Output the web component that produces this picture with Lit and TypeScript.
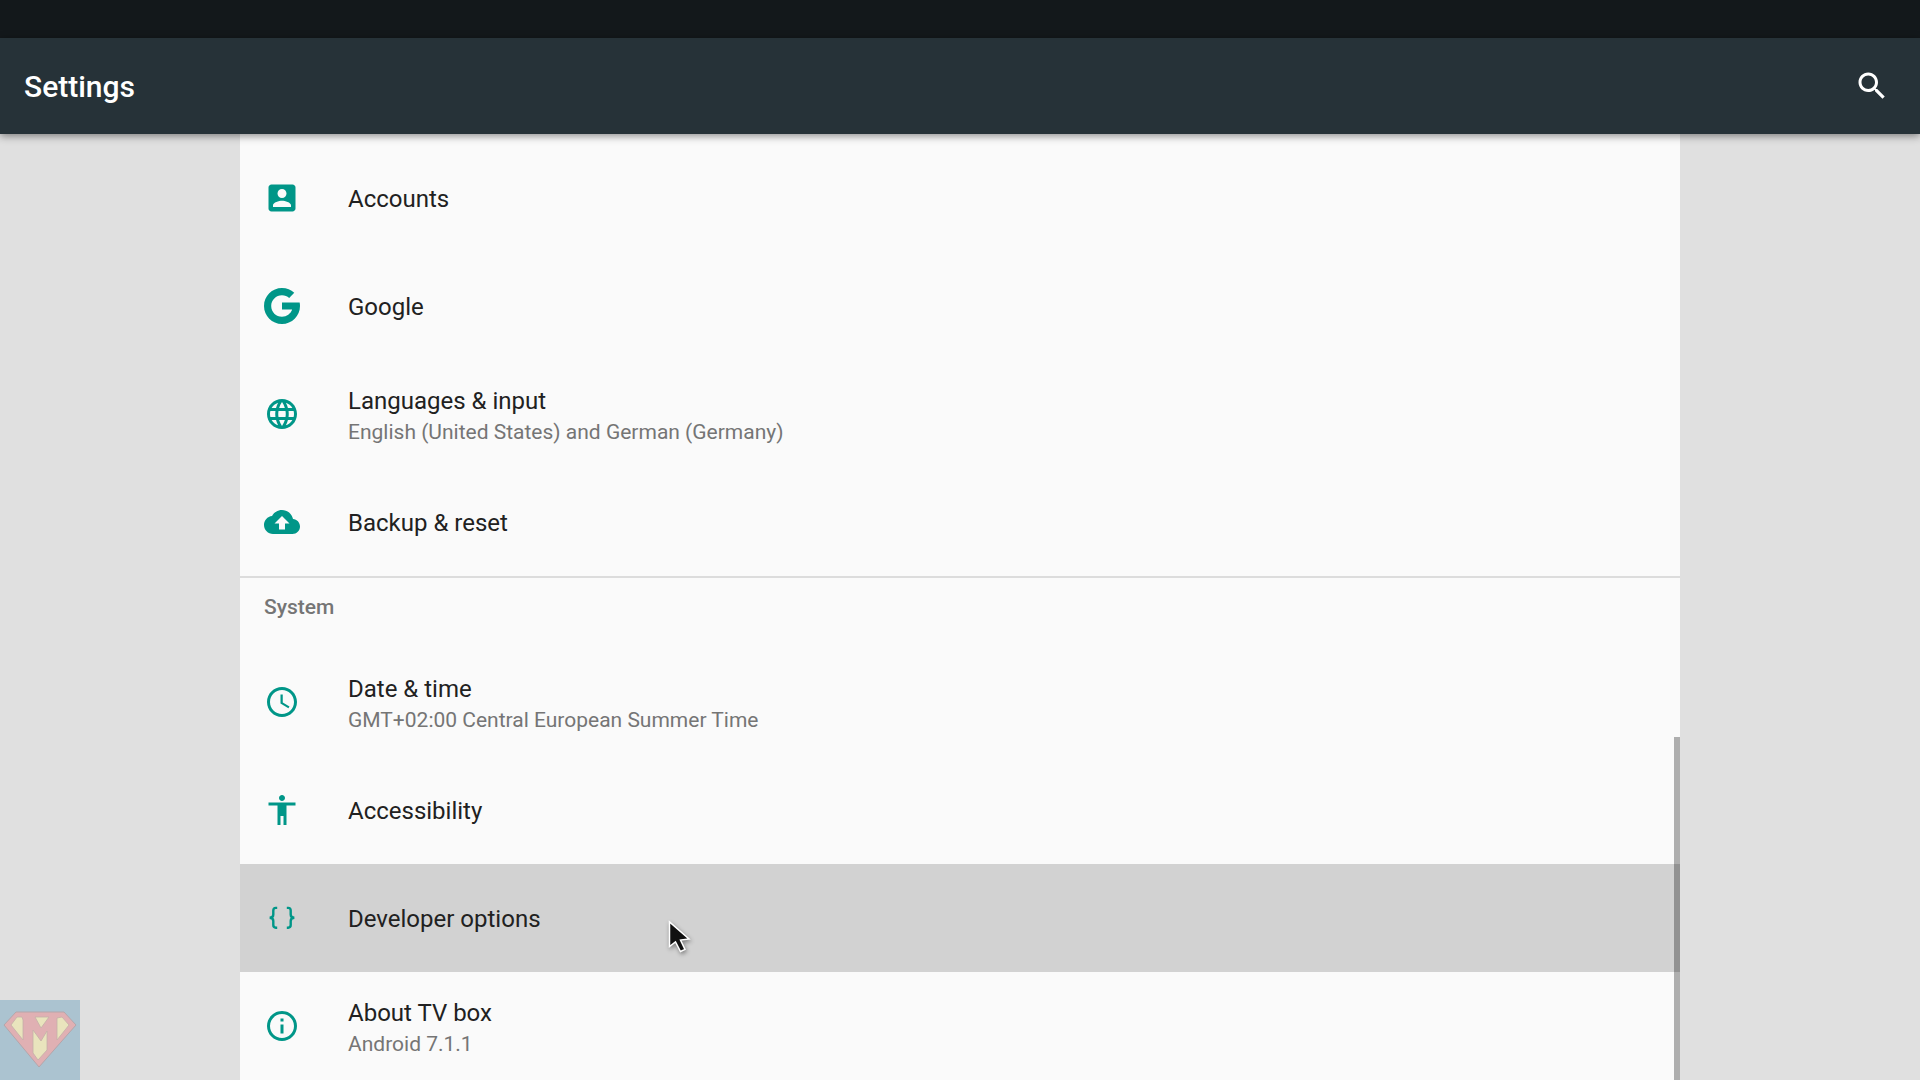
import { LitElement, html, css, svg, nothing, type TemplateResult } from "lit";
import { customElement, property } from "lit/decorators.js";
import { classMap } from "lit/directives/class-map.js";

type Entry = { title: string; summary?: string; icon: keyof typeof icons; active?: boolean };

const icons = {
  account: svg`<path d="M3 5v14c0 1.100.89 2 2 2h14c1.100 0 2-.9 2-2V5c0-1.100-.9-2-2-2H5c-1.110 0-2 .9-2 2zm12 4c0 1.660-1.340 3-3 3s-3-1.340-3-3 1.340-3 3-3 3 1.340 3 3zm-9 8c0-2 4-3.100 6-3.100s6 1.100 6 3.100v1H6v-1z"/>`,
  google: svg`<g transform="scale(.6) translate(-4 -4)"><path d="M43.611 20.083H42V20H24v8h11.303c-1.649 4.657-6.080 8-11.303 8-6.627 0-12-5.373-12-12s5.373-12 12-12c3.059 0 5.842 1.154 7.961 3.039l5.657-5.657C34.046 6.053 29.268 4 24 4 12.955 4 4 12.955 4 24s8.955 20 20 20 20-8.955 20-20c0-1.341-.138-2.650-.389-3.917z"/></g>`,
  language: svg`<path d="M11.990 2C6.470 2 2 6.480 2 12s4.470 10 9.990 10C17.520 22 22 17.520 22 12S17.520 2 11.990 2zm6.930 6h-2.950c-.32-1.250-.78-2.450-1.380-3.560 1.840.63 3.370 1.910 4.330 3.560zM12 4.040c.83 1.200 1.480 2.530 1.910 3.960h-3.820c.43-1.430 1.080-2.760 1.910-3.960zM4.260 14C4.100 13.360 4 12.690 4 12s.1-1.360.26-2h3.380c-.08.66-.14 1.320-.14 2s.06 1.340.14 2H4.260zm.82 2h2.950c.32 1.250.78 2.450 1.380 3.560-1.840-.63-3.370-1.900-4.330-3.560zm2.950-8H5.080c.96-1.660 2.490-2.930 4.330-3.560C8.810 5.550 8.350 6.750 8.030 8zM12 19.960c-.83-1.200-1.480-2.530-1.910-3.960h3.820c-.43 1.430-1.080 2.760-1.910 3.960zM14.340 14H9.660c-.09-.66-.16-1.320-.16-2s.07-1.350.16-2h4.680c.09.65.16 1.320.16 2s-.07 1.340-.16 2zm.25 5.560c.6-1.110 1.060-2.310 1.380-3.560h2.950c-.96 1.650-2.490 2.930-4.330 3.560zM16.360 14c.08-.66.14-1.320.14-2s-.06-1.340-.14-2h3.380c.16.64.26 1.310.26 2s-.1 1.360-.26 2h-3.380z"/>`,
  backup: svg`<path d="M19.350 10.040C18.670 6.590 15.640 4 12 4 9.110 4 6.600 5.640 5.350 8.040 2.340 8.360 0 10.910 0 14c0 3.310 2.690 6 6 6h13c2.760 0 5-2.240 5-5 0-2.640-2.050-4.780-4.650-4.960zM14 13v4h-4v-4H7l5-5 5 5h-3z"/>`,
  clock: svg`<path d="M11.990 2C6.470 2 2 6.480 2 12s4.470 10 9.990 10C17.520 22 22 17.520 22 12S17.520 2 11.990 2zM12 20c-4.420 0-8-3.580-8-8s3.580-8 8-8 8 3.580 8 8-3.580 8-8 8zm.5-13H11v6l5.250 3.150.75-1.230-4.500-2.670z"/>`,
  accessibility: svg`<path d="M12 2c1.100 0 2 .9 2 2s-.9 2-2 2-2-.9-2-2 .9-2 2-2zm9 7h-6v13h-2v-6h-2v6H9V9H3V7h18v2z"/>`,
  braces: svg`<g transform="scale(.6667)" fill="none" stroke="currentColor" stroke-width="2.400"><path d="M13.200 7.900h-1.400q-2.500 0-2.500 2.600v4q0 3.300-3.700 3.300q3.700 0 3.700 3.300v4q0 2.600 2.500 2.600h1.400M22.800 7.900h1.400q2.500 0 2.500 2.600v4q0 3.300 3.700 3.300q-3.700 0-3.700 3.300v4q0 2.600-2.500 2.600h-1.400"/></g>`,
  info: svg`<path d="M11 17h2v-6h-2v6zm1-15C6.480 2 2 6.480 2 12s4.480 10 10 10 10-4.480 10-10S17.520 2 12 2zm0 18c-4.410 0-8-3.590-8-8s3.590-8 8-8 8 3.590 8 8-3.590 8-8 8zM11 9h2V7h-2v2z"/>`,
  search: svg`<path d="M15.500 14h-.79l-.28-.27C15.410 12.590 16 11.110 16 9.500 16 5.910 13.090 3 9.500 3S3 5.910 3 9.500 5.910 16 9.500 16c1.610 0 3.090-.59 4.230-1.570l.27.28v.79l5 4.990L20.490 19l-4.990-5zm-6 0C7.010 14 5 11.990 5 9.500S7.010 5 9.500 5 14 7.010 14 9.500 11.990 14 9.500 14z"/>`,
};

const personal: Entry[] = [
  { title: "Accounts", icon: "account" },
  { title: "Google", icon: "google" },
  { title: "Languages & input", summary: "English (United States) and German (Germany)", icon: "language" },
  { title: "Backup & reset", icon: "backup" },
];

const system: Entry[] = [
  { title: "Date & time", summary: "GMT+02:00 Central European Summer Time", icon: "clock" },
  { title: "Accessibility", icon: "accessibility" },
  { title: "Developer options", icon: "braces", active: true },
  { title: "About TV box", summary: "Android 7.1.1", icon: "info" },
];

@customElement("settings-icon")
export class SettingsIcon extends LitElement {
  @property() name: keyof typeof icons = "info";

  static styles = css`
    :host {
      display: block;
      flex: none;
      width: 36px;
      height: 36px;
    }
    .glyph {
      display: block;
      width: 100%;
      height: 100%;
      fill: currentColor;
    }
  `;

  render() {
    return html`<svg class="glyph" viewBox="0 0 24 24" aria-hidden="true">${icons[this.name]}</svg>`;
  }
}

@customElement("settings-row")
export class SettingsRow extends LitElement {
  @property({ attribute: false }) entry!: Entry;

  static styles = css`
    :host {
      display: block;
    }
    .row {
      display: flex;
      align-items: center;
      gap: 48px;
      min-height: 108px;
      padding: 0 24px;
      box-sizing: border-box;
      color: #212121;
      text-decoration: none;
    }
    .active {
      background: #d2d2d2;
    }
    .icon {
      color: #009688;
    }
    .text {
      display: flex;
      flex-direction: column;
      padding-top: 2px;
    }
    .title {
      font-size: 24px;
      line-height: 34px;
    }
    .summary {
      font-size: 21px;
      line-height: 28px;
      color: #757575;
    }
  `;

  render() {
    const { title, summary, icon, active = false } = this.entry;
    return html`
      <a class=${classMap({ row: true, active })} href="#">
        <settings-icon class="icon" .name=${icon}></settings-icon>
        <span class="text">
          <span class="title">${title}</span>
          ${summary ? html`<span class="summary">${summary}</span>` : nothing}
        </span>
      </a>
    `;
  }
}

@customElement("app-root")
export class AppRoot extends LitElement {
  static styles = css`
    :host {
      display: flex;
      flex-direction: column;
      position: relative;
      height: 100vh;
      overflow: hidden;
      background: #e0e0e0;
      font-family: Roboto, "Liberation Sans", sans-serif;
    }
    .status {
      flex: none;
      height: 38px;
      background: #13181b;
    }
    .bar {
      display: flex;
      flex: none;
      align-items: center;
      justify-content: space-between;
      height: 96px;
      padding: 0 30px 0 24px;
      background: #263238;
      color: #fff;
      box-shadow: 0 2px 8px rgba(0, 0, 0, 0.45);
      z-index: 1;
    }
    .heading {
      margin: 0;
      padding-top: 2px;
      font-size: 30px;
      line-height: 40px;
      font-weight: 500;
    }
    .search {
      padding: 0;
      border: 0;
      background: none;
      color: inherit;
    }
    .content {
      position: relative;
      flex: 1;
      min-height: 0;
      width: 75%;
      margin: 0 auto;
      padding-top: 10px;
      box-sizing: border-box;
      overflow: hidden;
      background: #fafafa;
    }
    .list {
      margin: 0;
      padding: 0;
      list-style: none;
    }
    .section {
      margin: 0;
      height: 72px;
      padding: 15px 24px 0;
      box-sizing: border-box;
      border-top: 2px solid #dcdcdc;
      font-size: 21px;
      line-height: 28px;
      font-weight: 500;
      color: #757575;
    }
    .thumb {
      position: absolute;
      right: 0;
      bottom: 0;
      width: 6px;
      height: 343px;
      background: rgba(0, 0, 0, 0.3);
    }
    .pointer {
      position: absolute;
      left: 663px;
      top: 917px;
      width: 32px;
      height: 42px;
      z-index: 2;
      filter: drop-shadow(1px 2px 2px rgba(0, 0, 0, 0.4));
    }
    .badge {
      position: absolute;
      left: 0;
      bottom: 0;
      width: 80px;
      height: 80px;
    }
  `;

  private rows(entries: Entry[]): TemplateResult {
    return html`<ul class="list">
      ${entries.map((entry) => html`<li><settings-row .entry=${entry}></settings-row></li>`)}
    </ul>`;
  }

  render() {
    return html`
      <div class="status"></div>
      <header class="bar">
        <h1 class="heading">Settings</h1>
        <button class="search" aria-label="Search"><settings-icon name="search"></settings-icon></button>
      </header>
      <main class="content">
        ${this.rows(personal)}
        <h2 class="section">System</h2>
        ${this.rows(system)}
        <div class="thumb"></div>
      </main>
      <svg class="badge" viewBox="0 0 80 80" aria-hidden="true">
        <rect width="80" height="80" fill="#abc3d0" />
        <path d="M16 12H64L76 25L39 67L4 25Z" fill="#e0b0b3" stroke="#b5a5aa" />
        <g fill="#e9e4bd" stroke="#c4b0a8" stroke-width=".8">
          <path d="M17 17H22L23 20V40L11 25Z" />
          <path d="M35 17H49L41 28Z" />
          <path d="M57 18L62 17L69 25L57 40Z" />
          <path d="M33 30L41 41L47 31V50L38 60L33 53Z" />
        </g>
      </svg>
      <svg class="pointer" viewBox="0 0 32 42" aria-hidden="true">
        <path d="M6.500 5V29.500L12.500 25L17.500 34.500L22 32.500L17.500 23L26 22Z" fill="#111" stroke="#fff" stroke-width="1.500" />
      </svg>
    `;
  }
}
